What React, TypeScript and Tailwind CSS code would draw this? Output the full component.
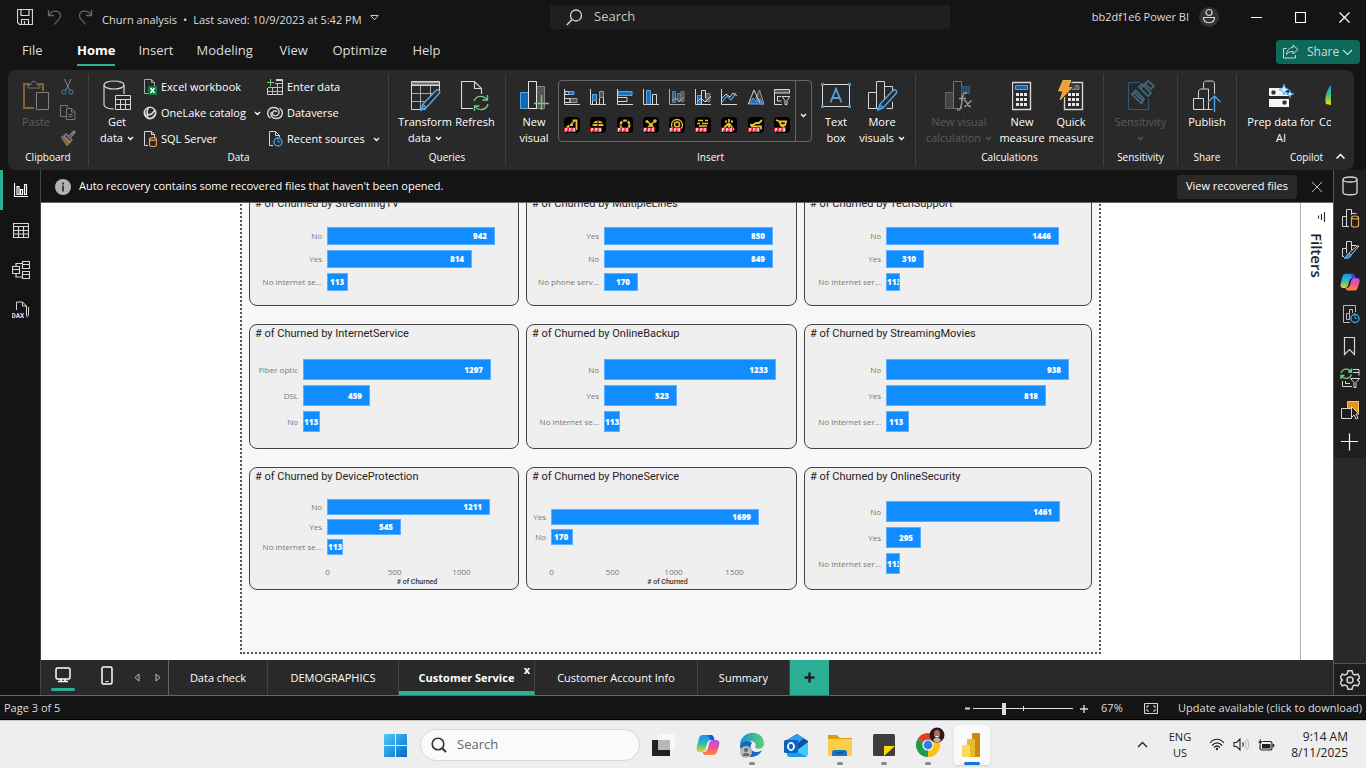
import React from "react";

type P = { children?: React.ReactNode };

/* ---------- shared icon frame ---------- */
function Ic({ w = 16, h, vb, children, className = "" }: P & { w?: number; h?: number; vb?: string; className?: string }) {
  const hh = h ?? w;
  return (
    <svg width={w} height={hh} viewBox={vb ?? `0 0 ${w} ${hh}`} fill="none" stroke="#d6d6d6" strokeWidth="1" className={`shrink-0 ${className}`} aria-hidden="true">
      {children}
    </svg>
  );
}

function Chevron({ className = "" }: { className?: string }) {
  return (
    <svg width="7" height="5" viewBox="0 0 7 5" fill="none" stroke="currentColor" strokeWidth="1.3" className={`inline-block shrink-0 ${className}`} aria-hidden="true">
      <path d="M1 1l2.500 2.500L6 1" />
    </svg>
  );
}

/* ---------- charts ---------- */
type Bar = { label: string; value: number; size: number };
type Chart = {
  field: string;
  offset: number;
  bars: Bar[];
  tight?: boolean;
  axis?: { ticks: number[]; pitch: number; titleShift: string };
};

const rowOne: Chart[] = [
  { field: "StreamingTV", offset: 77, bars: [{ label: "No", value: 942, size: 168 }, { label: "Yes", value: 814, size: 145 }, { label: "No internet se...", value: 113, size: 21 }] },
  { field: "MultipleLines", offset: 77, bars: [{ label: "Yes", value: 850, size: 169 }, { label: "No", value: 849, size: 169 }, { label: "No phone serv...", value: 170, size: 34 }] },
  { field: "TechSupport", offset: 81, bars: [{ label: "No", value: 1446, size: 173 }, { label: "Yes", value: 310, size: 38 }, { label: "No internet ser...", value: 113, size: 14 }] },
];
const rowTwo: Chart[] = [
  { field: "InternetService", offset: 53, bars: [{ label: "Fiber optic", value: 1297, size: 188 }, { label: "DSL", value: 459, size: 67 }, { label: "No", value: 113, size: 17 }] },
  { field: "OnlineBackup", offset: 77, bars: [{ label: "No", value: 1233, size: 172 }, { label: "Yes", value: 523, size: 73 }, { label: "No internet se...", value: 113, size: 16 }] },
  { field: "StreamingMovies", offset: 81, bars: [{ label: "No", value: 938, size: 183 }, { label: "Yes", value: 818, size: 160 }, { label: "No internet ser...", value: 113, size: 23 }] },
];
const rowThree: Chart[] = [
  { field: "DeviceProtection", offset: 77, tight: true, axis: { ticks: [0, 500, 1000], pitch: 67, titleShift: "pl-[66px]" }, bars: [{ label: "No", value: 1211, size: 163 }, { label: "Yes", value: 545, size: 74 }, { label: "No internet se...", value: 113, size: 16 }] },
  { field: "PhoneService", offset: 24, tight: true, axis: { ticks: [0, 500, 1000, 1500], pitch: 61, titleShift: "pl-[12px]" }, bars: [{ label: "Yes", value: 1699, size: 208 }, { label: "No", value: 170, size: 22 }] },
  { field: "OnlineSecurity", offset: 81, bars: [{ label: "No", value: 1461, size: 174 }, { label: "Yes", value: 295, size: 35 }, { label: "No internet ser...", value: 113, size: 14 }] },
];

function ChartCard({ chart, barClass, stackClass, className }: { chart: Chart; barClass: string; stackClass: string; className: string }) {
  return (
    <section className={`flex flex-col rounded-lg border border-[#444] bg-[#efefef] ${className}`}>
      <h2 className="px-[5px] pt-px font-['Roboto',sans-serif] text-[11px] leading-4 text-[#252423]">
        # of Churned by {chart.field}
      </h2>
      <div className={`flex flex-col ${stackClass}`}>
        {chart.bars.map((b) => (
          <div key={b.label} className={`flex items-center ${barClass}`}>
            <span className="flex shrink-0 justify-end whitespace-nowrap pr-[5px] text-[8px] text-[#777]" style={{ width: chart.offset }}>
              {b.label}
            </span>
            <div
              className={`flex h-full items-center overflow-hidden border border-[#5cb0ff] bg-[#118dff] text-[8px] font-extrabold text-white ${b.size < 20 ? "justify-start" : b.size < 30 ? "justify-start pl-[2px]" : "justify-end pr-[7px]"}`}
              style={{ width: b.size }}
            >
              {b.value}
            </div>
          </div>
        ))}
      </div>
      {chart.axis && (
        <div className="mt-auto pb-[2px]">
          <div className="flex" style={{ marginLeft: chart.offset - Math.floor(chart.axis.pitch / 2) }}>
            {chart.axis.ticks.map((t) => (
              <span key={t} className="shrink-0 text-center text-[8px] leading-[10px] text-[#777]" style={{ width: chart.axis!.pitch }}>
                {t}
              </span>
            ))}
          </div>
          <p className={`text-center font-['Roboto',sans-serif] text-[7px] font-medium leading-[10px] text-[#333] ${chart.axis.titleShift}`}># of Churned</p>
        </div>
      )}
    </section>
  );
}

/* ---------- ribbon ---------- */
function Group({ title, width, children }: P & { title: string; width: string }) {
  return (
    <div className={`flex flex-col pt-2 ${width}`}>
      <div className="flex h-[70px] items-start">{children}</div>
      <div className="text-center text-[10px] leading-[18px] text-white">{title}</div>
    </div>
  );
}
function Divider() {
  return <div className="my-1 w-px shrink-0 bg-[#3f3f3f]" />;
}
function Tile({ icon, l1, l2, chevron, width, dim }: { icon: React.ReactNode; l1: string; l2?: string; chevron?: boolean; width: string; dim?: boolean }) {
  return (
    <button type="button" disabled={dim} className={`flex shrink-0 flex-col items-center text-[11px] leading-4 ${dim ? "text-[#5c5c5c]" : "text-white"} ${width}`}>
      <span className="flex h-9 items-center justify-center">{icon}</span>
      <span className="whitespace-nowrap">{l1}</span>
      {(l2 || chevron) && (
        <span className="flex h-4 items-center gap-1 whitespace-nowrap">
          {l2}
          {chevron && <Chevron />}
        </span>
      )}
    </button>
  );
}
function RowButton({ icon, label, chevron }: { icon: React.ReactNode; label: string; chevron?: boolean }) {
  return (
    <button type="button" className="flex h-[26px] items-center gap-1 whitespace-nowrap text-[11px] text-white">
      {icon}
      {label}
      {chevron && <Chevron className="ml-1" />}
    </button>
  );
}

const pasteIcon = (
  <Ic w={28} h={32}>
    <path d="M8 4H2v24h10M16 4h5v7" stroke="#8a6130" strokeWidth="2" />
    <path d="M6 8V5h3c0-5 6-5 6 0h3v3z" stroke="#777" />
    <path d="M14.500 12.500h12v17h-12z" stroke="#808080" />
  </Ic>
);
const getDataIcon = (
  <Ic w={28} h={32}>
    <ellipse cx="11" cy="5" rx="10" ry="4" strokeWidth="1.200" />
    <path d="M1 5v20c0 2 4 4 10 4M21 5v9" strokeWidth="1.200" />
    <path d="M12.500 15.500h15v14h-15zM12.500 19.500h15M12.500 24.500h15M17.500 19v10M22.500 19v10" />
  </Ic>
);
const pageOutline = "M5 14.500H1.500V.5h7l3 3V7M8.500.5v3h3";
const excelIcon = (
  <Ic w={14} h={16}>
    <path d={pageOutline} stroke="#aaa" />
    <path d="M5 7h9v9H5z" fill="#107c41" stroke="none" />
    <path d="M7.500 9l4 5M11.500 9l-4 5" stroke="#fff" strokeWidth="1.300" />
  </Ic>
);
const oneLakeIcon = (
  <Ic w={14}>
    <circle cx="7" cy="7" r="5.800" strokeWidth="1.400" />
    <path d="M5.500 2c-2 3-2 6 0 6.500S10 7 12 4M5 8c-1 2-.500 4 1 4.500 2 0 5-2 6.500-5M2 5.500c-1 3 1 5 3 3" strokeWidth="1.600" />
  </Ic>
);
const sqlIcon = (
  <Ic w={14} h={16}>
    <path d={pageOutline} />
    <path d="M6.500 8v6c0 2 7 2 7 0V8" fill="#292929" stroke="#e8a452" strokeWidth="1.200" />
    <ellipse cx="10" cy="8" rx="3.500" ry="1.400" stroke="#e8a452" fill="#292929" strokeWidth="1.200" />
  </Ic>
);
const enterIcon = (
  <Ic w={16}>
    <path d="M9 .5h6.500v15H.5V9M9 1.500h6" />
    <path d="M8 4.500h7.500M1 8.500h14.500M1 12.500h14.500M5.500 8v7.500M10.500 4v11.500" stroke="#bbb" />
    <path d="M3.500 0v7M0 3.500h7" stroke="#6fd080" />
  </Ic>
);
const dataverseIcon = (
  <Ic w={16}>
    <path d="M3.500 13C-1 10 0 3.500 6 2.500c5-.6 7 3.500 5.500 6.500-1.500 2.500-5.500 2.500-6 0-.4-3 3-4.500 4.500-2" strokeWidth="1.400" />
    <path d="M12.500 3c4.500 3 3.500 9.500-2.500 10.500-5 .6-7-3.500-5.500-6.500" strokeWidth="1.400" />
  </Ic>
);
const recentIcon = (
  <Ic w={16}>
    <path d="M6 14.500H2.500V.5h6l4 4V6M8.500.5v4h4" />
    <circle cx="11" cy="11" r="4" stroke="#4da3e0" strokeWidth="1.300" />
    <path d="M11 8.500V11h2" stroke="#4da3e0" />
  </Ic>
);
const pencil = (
  <>
    <path d="M11 30l2-6L26 10.500c2-2 5 1 3 3L16 28z" fill="#292929" stroke="#5aa7e6" strokeWidth="1.400" />
    <path d="M11 30l2-6 3.500 3.500z" fill="#1c7fd6" stroke="#5aa7e6" />
  </>
);
const transformIcon = (
  <Ic w={31} h={32}>
    <path d="M1.500 2h28v3h-28z" fill="#666" />
    <path d="M1.500 1.500h28v28h-28zM1.500 5.500h28" />
    <path d="M1.500 13.500h28M1.500 21.500h20M10.500 6v23M20.500 6v20" stroke="#aaa" />
    <path d="M14 31h17V12z" fill="#292929" stroke="none" />
    {pencil}
  </Ic>
);
const refreshIcon = (
  <Ic w={28} h={32}>
    <path d="M12 28.500H.5v-27h13l7 7V14M13.500 1.500v7h7" strokeWidth="1.200" />
    <path d="M13 21c2-6 10-6 13-1M27 24c-2 7-10 7-13 2M26.500 15v5h-5M13.500 31v-5h5" stroke="#6fd080" strokeWidth="1.300" />
  </Ic>
);
const newVisualIcon = (
  <Ic w={29} h={32}>
    <path d="M16.500 6.500h8v22h-8z" fill="#555" stroke="#888" />
    <path d="M.5 12.500h8v16h-8z" fill="#1168b8" stroke="#5aa7e6" />
    <path d="M8.500 1.500h8v27h-8z" fill="#292929" stroke="#e6e6e6" />
    <path d="M21.500 15v15M14 23.500h15" stroke="#6fd080" strokeWidth="1.300" />
  </Ic>
);
const textBoxIcon = (
  <Ic w={32} h={28}>
    <path d="M2.500 2.500h27v22h-27z" />
    <path d="M1 1h3v3H1zM28 1h3v3h-3zM1 23h3v3H1zM28 23h3v3h-3z" fill="#3a96dd" stroke="none" />
    <path d="M10.500 20.500L16 7l5.500 13.500M12.500 16h7" stroke="#4da3e0" strokeWidth="1.800" />
  </Ic>
);
const moreVisualsIcon = (
  <Ic w={31} h={32}>
    <path d="M1.500 12.500h8v16h-8zM9.500 1.500h8v27h-8zM17.500 6.500h8v22h-8z" />
    <path d="M10 30l17-19v9l-8 9z" fill="#292929" stroke="none" />
    {pencil}
  </Ic>
);
const visualCalcIcon = (
  <Ic w={30} h={32}>
    <path d="M1.500 12.500h8v16h-8z" fill="#444" stroke="#666" />
    <path d="M9.500 1.500h8v27h-8z" stroke="#777" />
    <path d="M17.500 6.500h8v7h-8z" fill="#224e70" stroke="#2d5c80" />
    <path d="M13 30c4 1 4-3 5-9s1-9 5-8M15 18.500h7M20 20.500c4-1 2 7 7 6M27.500 20.500l-7 6.500" stroke="#999" strokeWidth="1.400" />
  </Ic>
);
const calcBody = (x: number) => (
  <>
    <path d={`M${x + 0.5} 2.500h18v27h-18z`} strokeWidth="1.400" />
    {[13, 18, 23].map((y) => [4, 8, 12].map((dx) => <path key={`${y}-${dx}`} d={`M${x + dx} ${y}h3v3h-3z`} fill="#e6e6e6" stroke="none" />))}
  </>
);
const measureIcon = (
  <Ic w={20} h={32}>
    {calcBody(0)}
    <path d="M3.500 5.500h12v4h-12z" fill="#1168b8" stroke="#5aa7e6" />
  </Ic>
);
const quickIcon = (
  <Ic w={26} h={32}>
    {calcBody(6)}
    <path d="M11 5.500h10v4H11z" fill="#666" stroke="#888" />
    <path d="M4 0h9l-3 7h4L1 21l4-10H0z" fill="#292929" stroke="#292929" strokeWidth="3" />
    <path d="M5 .5h8l-3 7h4L2 20l3-9H.5z" fill="#f0a030" stroke="#f6c667" strokeWidth=".8" />
  </Ic>
);
const sensitivityIcon = (
  <Ic w={28} h={32}>
    <path d="M13 2.500H1.500v27h20V19" stroke="#345a73" />
    <path d="M5 14.500l3.500-4L17 19l-2.500 4.500zM7 12.500l9 8.500" stroke="#426e8c" strokeWidth="1.600" />
    <path d="M12 7l3-3 9 9-3 3zM18 4l3-3 6 5-3 3zM13 9l5-4" stroke="#426e8c" strokeWidth="1.600" />
  </Ic>
);
const publishIcon = (
  <Ic w={28} h={32}>
    <path d="M.5 18.500h10v11H.5z" />
    <path d="M5.500 18v-6c0-2 1-3 3-3h7v20.500h-5M10.500 9V4c0-2 1-3 3-3h5c2 0 3 1 3 3v10M15.500 29.500h4" />
    <path d="M21.500 32V16M15 22l6.500-6 6 6" stroke="#4da3e0" strokeWidth="1.400" />
  </Ic>
);
const prepIcon = (
  <Ic w={26} h={24}>
    <path d="M1 4h13l3 4 4 1v3H1zM1 15h20v8H1z" fill="#f5f5f5" stroke="none" />
    <path d="M4 7h3v3H4zM15 17h3v3h-3z" fill="#333" stroke="#333" />
    <path d="M16 0l1.500 4L21 5.500 17.500 7 16 11l-1.500-4L11 5.500 14.500 4zM22 6l1 3 3 1-3 1-1 3-1-3-3-1 3-1z" fill="#d8efff" stroke="#2f95e8" strokeWidth=".8" />
  </Ic>
);

const galleryTop: React.ReactNode[] = [
  <><path d="M1 2.500h4v3H1z" /><path d="M5 2.500h5v3H5z" fill="#1c6fc0" stroke="#5aa7e6" /><path d="M6 9.500h7v4H6z" fill="#555" stroke="#999" /><path d="M.5 0v15.500H16M1 9.500h5v4H1" /></>,
  <><path d="M2.500 5.500h4v6h-4z" fill="#1c6fc0" stroke="#5aa7e6" /><path d="M9.500 2.500h4v6h-4z" fill="#555" stroke="#999" /><path d="M.5 0v15.500H16M2.500 12v3.500M6.500 12v3.500M9.500 9v6.500M13.500 9v6.500" /></>,
  <><path d="M1 2.500h14v4H1z" fill="#1c6fc0" stroke="#5aa7e6" /><path d="M.5 0v15.500H16M1 8.500h9v4H1" /></>,
  <><path d="M3.500 1.500h4v14h-4z" fill="#1c6fc0" stroke="#5aa7e6" /><path d="M.5 0v15.500H16M9.500 15V5.500h4V15" /></>,
  <><path d="M3.500 2.500h3v11h-3z" fill="#1c6fc0" stroke="#777" /><path d="M8.500 4.500h3v7h-3zM12 2.500h3v10h-3z" fill="#555" stroke="#777" /><path d="M.5 0v15.500H16M3 12l4-3 3 4 5-5" stroke="#aaa" /></>,
  <><path d="M2.500 6.500h4v9h-4z" fill="#1c6fc0" stroke="#5aa7e6" /><path d="M11 4.500h4v8h-4z" fill="#555" stroke="#888" /><path d="M.5 0v15.500H16M6.500 15V1.500h4V9M2 13l4-4 4 4 6-6" /></>,
  <><path d="M1 13l5-6 4 4 5-7" stroke="#3f93dc" strokeWidth="1.300" /><path d="M.5 0v15.500H16M1 9l4-4 4 3 3-4 4 3" /></>,
  <><path d="M8 9l3.500-8L16 15h-5z" fill="#444" stroke="#999" /><path d="M1 15l4-6 4 4 3-3 3 5z" fill="#1c6fc0" stroke="#5aa7e6" /><path d="M0 15.500L6 1l6 13" /></>,
  <><path d="M1 1h14v3H1z" fill="#555" stroke="none" /><path d="M.5.500h15v3.500H.5zM.5 4v11.500H8M3 7.500h4M3.500 8v4h4M8 7.500h8l-3 4v4h-2v-4z" /></>,
];
const galleryPro: React.ReactNode[] = [
  <path d="M2.500 10h2V8M6 8h2V5.500M9.500 5.500V3.500h3V13" />,
  <><path d="M2.500 9a5.500 5.500 0 0111 0z" fill="#e9bd32" stroke="none" /><path d="M8 3v7M3 6.500h10" stroke="#111" strokeWidth="1" /></>,
  <circle cx="8" cy="8" r="4.500" strokeDasharray="3.700 1" strokeWidth="2.200" />,
  <><path d="M4 4l8 8M12 4L5 10" strokeWidth="1.500" /><circle cx="12" cy="4" r="1.800" fill="#e9bd32" stroke="none" /><circle cx="4" cy="4.500" r="1.500" fill="#e9bd32" stroke="none" /><circle cx="8" cy="8" r="2" fill="#e9bd32" stroke="none" /></>,
  <><circle cx="8" cy="8" r="5.500" strokeWidth="1.300" /><circle cx="8" cy="7.500" r="2.500" strokeWidth="1.600" /></>,
  <path d="M3 3.500h5M10 3.500h3M2 6.500h3M7 6.500h6M4 9h8" strokeWidth="1.600" />,
  <path d="M8 2v3M4 4.500h2M10 4.500h2M8 6l-5 5M8 6l5 7M8 6v5" />,
  <path d="M2 8h3l3-2h3l3-3M3 9.500h10v3" />,
  <path d="M2 3l4 1.500h7M5 4l2 4h4l1.500-4M6 8l5 3" />,
];

function Gallery() {
  return (
    <div className="flex h-[62px] w-[254px] shrink-0 rounded border border-[#666]">
      <div className="grid flex-1 grid-cols-9 items-center">
        {galleryTop.map((g, i) => (
          <button type="button" key={`t${i}`} aria-label={`Visual ${i + 1}`} className="flex justify-center"><Ic>{g}</Ic></button>
        ))}
        {galleryPro.map((g, i) => (
          <button type="button" key={`p${i}`} aria-label={`Pro visual ${i + 1}`} className="-mt-[3px] flex justify-center">
            <Ic>
              <rect width="16" height="16" rx="4" fill="#000" stroke="none" />
              <g stroke="#e9bd32" strokeWidth="1.800">{g}</g>
              <path d="M0 10.500h12V15H0z" fill="#e81123" stroke="none" />
              <path d="M1.500 14.500v-3H3V13H2M5.500 14.500v-3H7V13H6M9 11.500h1.500v2.500H9z" stroke="#fff" strokeWidth=".8" />
            </Ic>
          </button>
        ))}
      </div>
      <button type="button" aria-label="More visual types" className="flex w-[16px] items-center justify-center border-l border-[#666] pt-2 text-white"><Chevron /></button>
    </div>
  );
}

function Ribbon() {
  return (
    <div className="mx-2 mr-3 flex h-[100px] shrink-0 overflow-hidden rounded-lg bg-[#292929]">
      <Group title="Clipboard" width="w-[80px] shrink-0">
        <div className="flex pl-2">
          <Tile width="w-[40px]" icon={pasteIcon} l1="Paste" dim />
          <div className="flex flex-col gap-[9px] pl-1">
            <button type="button" aria-label="Cut"><Ic w={16} h={17}><path d="M4.500 1l5 11M11 1L6 12" stroke="#888" /><circle cx="4" cy="14" r="2" stroke="#35688c" strokeWidth="1.300" /><circle cx="11" cy="14" r="2" stroke="#35688c" strokeWidth="1.300" /></Ic></button>
            <button type="button" aria-label="Copy"><Ic w={16} h={17}><path d="M6 12.500H.5v-11h7v2M6.500 4.500h5l3.500 3v8H6.500zM11.500 4.500v3.500H15M8.500 10.500h4M8.500 12.500h4" stroke="#777" /></Ic></button>
            <button type="button" aria-label="Format painter"><Ic w={16} h={17}><path d="M1 7l3-1 7 6-4 4z" fill="#8a6b3c" stroke="#8a6b3c" /><path d="M4 6l2-2 6 6-2 2zM9 6l5-5 1 1-4 5" stroke="#888" strokeWidth="1.300" /></Ic></button>
          </div>
        </div>
      </Group>
      <Divider />
      <Group title="Data" width="w-[299px] shrink-0">
        <Tile width="w-[54px] pl-[2px]" icon={getDataIcon} l1="Get" l2="data" chevron />
        <div className="-mt-1 flex w-[124px] shrink-0 flex-col items-start">
          <RowButton icon={excelIcon} label="Excel workbook" />
          <RowButton icon={oneLakeIcon} label="OneLake catalog" chevron />
          <RowButton icon={sqlIcon} label="SQL Server" />
        </div>
        <div className="-mt-1 flex flex-col items-start">
          <RowButton icon={enterIcon} label="Enter data" />
          <RowButton icon={dataverseIcon} label="Dataverse" />
          <RowButton icon={recentIcon} label="Recent sources" chevron />
        </div>
      </Group>
      <Divider />
      <Group title="Queries" width="w-[116px] shrink-0">
        <div className="flex pl-[9px]">
          <Tile width="w-[54px]" icon={transformIcon} l1="Transform" l2="data" chevron />
          <Tile width="w-[46px]" icon={refreshIcon} l1="Refresh" />
        </div>
      </Group>
      <Divider />
      <Group title="Insert" width="w-[409px] shrink-0">
        <Tile width="w-[52px] pl-1" icon={newVisualIcon} l1="New" l2="visual" />
        <div className="pt-[2px]"><Gallery /></div>
        <Tile width="w-[48px]" icon={textBoxIcon} l1="Text" l2="box" />
        <Tile width="w-[44px]" icon={moreVisualsIcon} l1="More" l2="visuals" chevron />
      </Group>
      <Divider />
      <Group title="Calculations" width="w-[187px] shrink-0">
        <Tile width="w-[82px] pl-1" icon={visualCalcIcon} l1="New visual" l2="calculation" chevron dim />
        <Tile width="w-[48px]" icon={measureIcon} l1="New" l2="measure" />
        <Tile width="w-[50px]" icon={quickIcon} l1="Quick" l2="measure" />
      </Group>
      <Divider />
      <Group title="Sensitivity" width="w-[73px] shrink-0">
        <Tile width="w-full" icon={sensitivityIcon} l1="Sensitivity" chevron dim />
      </Group>
      <Divider />
      <Group title="Share" width="w-[58px] shrink-0">
        <Tile width="w-full" icon={publishIcon} l1="Publish" />
      </Group>
      <Divider />
      <div className="flex min-w-0 flex-1 items-end">
        <div className="flex min-w-0 flex-1 flex-col self-stretch pt-2">
          <div className="flex h-[70px]">
            <Tile width="w-[82px] pl-[6px]" icon={prepIcon} l1="Prep data for" l2="AI" />
            <button type="button" className="flex w-3 shrink-0 flex-col items-start overflow-hidden whitespace-nowrap text-[11px] leading-4 text-white" aria-label="Copilot">
              <span className="flex h-9 items-center pl-1"><Ic w={20} h={22}><defs><linearGradient id="cpl" x2="0" y2="1"><stop stopColor="#1a9be8" /><stop offset=".5" stopColor="#3fc47a" /><stop offset="1" stopColor="#ffd800" /></linearGradient></defs><path d="M8 0C4 4 1 14 3 19l5 1z" fill="url(#cpl)" stroke="none" /></Ic></span>
              Co
            </button>
          </div>
          <div className="pl-10 text-center text-[10px] leading-[18px] text-white">Copilot</div>
        </div>
        <button type="button" aria-label="Collapse ribbon" className="mb-[11px] flex w-[18px] shrink-0 text-white">
          <svg width="9" height="6" viewBox="0 0 9 6" fill="none" stroke="currentColor" strokeWidth="1.500" aria-hidden="true"><path d="M.5 5.500l4-4 4 4" /></svg>
        </button>
      </div>
    </div>
  );
}

/* ---------- window chrome ---------- */
function TitleBar() {
  return (
    <header className="flex h-[34px] shrink-0 items-center text-[#dedede]">
      <div className="flex w-[550px] shrink-0 items-center pl-[17px]">
        <button type="button" aria-label="Save"><Ic><path d="M.5.500h15v15h-13l-2-2zM4 .5v6h8v-6M4.500 15.500v-5h7v5M7.500 12v3.500" strokeWidth="1.200" /></Ic></button>
        <button type="button" aria-label="Undo" className="ml-[14px]"><Ic><path d="M1.500 1v5.500H7M1.500 6.500C5 0 14 1 13.500 7c0 3-3 4-6 8.500" stroke="#666" strokeWidth="1.300" /></Ic></button>
        <button type="button" aria-label="Redo" className="ml-[14px]"><Ic><path d="M14.500 1v5.500H9M14.500 6.500C11 0 2 1 2.500 7c0 3 3 4 6 8.500" stroke="#666" strokeWidth="1.300" /></Ic></button>
        <span className="ml-[9px] mt-[6px] flex items-center gap-2 whitespace-nowrap text-[11px] leading-5">
          <span className="flex gap-[6px]"><span>Churn analysis</span><span>•</span><span>Last saved: 10/9/2023 at 5:42 PM</span></span>
          <svg width="9" height="6" viewBox="0 0 9 6" fill="none" stroke="#ccc" className="-mt-1" aria-hidden="true"><path d="M.8.500h7.400L4.500 4.800z" /></svg>
        </span>
      </div>
      <label className="flex h-6 w-[400px] shrink items-center gap-[11px] rounded-[2px] bg-[#1f1f1f] pl-4">
        <Ic w={17}><circle cx="10" cy="6.500" r="5.500" strokeWidth="1.300" /><path d="M6 10.500L.8 16" strokeWidth="1.300" /></Ic>
        <input type="text" aria-label="Search" placeholder="Search" className="w-full bg-transparent text-[13px] outline-none placeholder:text-[#c8c8c8]" />
      </label>
      <div className="ml-auto flex items-center">
        <span className="whitespace-nowrap text-[11px]">bb2df1e6 Power BI</span>
        <button type="button" aria-label="Account" className="ml-[10px]"><Ic w={20}><circle cx="10" cy="10" r="10" fill="#333" stroke="none" /><circle cx="10" cy="5.500" r="3" strokeWidth="1.200" /><path d="M4.500 10.500h11c.5 7-11.500 7-11 0z" strokeWidth="1.200" /></Ic></button>
        <button type="button" aria-label="Minimize" className="ml-[15px] flex w-11 justify-center"><Ic w={11}><path d="M0 5.500h11" stroke="#fff" /></Ic></button>
        <button type="button" aria-label="Maximize" className="flex w-11 justify-center"><Ic w={11}><path d="M.5.500h10v10H.5z" stroke="#fff" strokeWidth="1.200" /></Ic></button>
        <button type="button" aria-label="Close" className="flex w-11 justify-center"><Ic w={11}><path d="M.5.500l10 10M10.500.500l-10 10" stroke="#fff" strokeWidth="1.200" /></Ic></button>
      </div>
    </header>
  );
}

function MenuBar() {
  const item = "border-b-2 border-transparent pb-[2px]";
  return (
    <nav className="flex h-9 shrink-0 items-center whitespace-nowrap pl-[22px] text-[13px] leading-6 text-[#dedede]">
      <button type="button" className={`w-[55px] text-left ${item}`}>File</button>
      <button type="button" className="mr-[23px] border-b-2 border-[#2bb095] pb-[2px] font-bold text-white">Home</button>
      <button type="button" className={`w-[58px] text-left ${item}`}>Insert</button>
      <button type="button" className={`w-[83px] text-left ${item}`}>Modeling</button>
      <button type="button" className={`w-[53px] text-left ${item}`}>View</button>
      <button type="button" className={`w-[80px] text-left ${item}`}>Optimize</button>
      <button type="button" className={item}>Help</button>
      <button type="button" className="ml-auto mr-[6px] flex h-6 w-[84px] items-center rounded bg-[#0c695a] pl-[7px] text-[12px] text-[#c9dcd8]">
        <Ic><path d="M3.500 4.500h-3v9.500h12v-3M10 1l5 4.500-5 4.500V7.500C7 7.500 5 8 3.500 10.500 4 6 6.500 3.500 10 3.500z" stroke="#c9dcd8" /></Ic>
        <span className="ml-2">Share</span>
        <svg width="11" height="7" viewBox="0 0 11 7" fill="none" stroke="#c9dcd8" strokeWidth="1.200" className="ml-[3px]" aria-hidden="true"><path d="M1 1l4.500 4.500L10 1" /></svg>
      </button>
    </nav>
  );
}

function LeftRail() {
  const b = "flex h-10 w-full items-center justify-center border-l-[3px] pr-[2px]";
  return (
    <nav className="flex w-10 shrink-0 flex-col bg-[#141414]">
      <button type="button" aria-label="Report view" className={`${b} border-[#2bb095]`}><Ic w={14} h={14}><path d="M.5 0v13.500H14M3 11.500v-8h2v8zM6.500 11.500v-5h2v5zM10.500 11.500v-10h2v10z" stroke="#fff" strokeWidth="1.200" /></Ic></button>
      <button type="button" aria-label="Table view" className={`${b} border-transparent`}><Ic w={16} h={15}><path d="M.5.500h15v14H.5zM.5 3.500h15M.5 7.500h15M.5 11h15M5.500 3v11.500M10.500 3v11.500" strokeWidth="1.200" /></Ic></button>
      <button type="button" aria-label="Model view" className={`${b} border-transparent`}><Ic w={18}><path d="M.5 5.500h7v7h-7zM.5 8.500h7M10.500.500h7v7h-7zM10.500 3.500h7M10.500 10.500h7v7h-7zM10.500 13.500h7M4 5.500v-3h6.500M4 12.500V16h6.500" strokeWidth="1.200" /></Ic></button>
      <button type="button" aria-label="DAX query view" className={`${b} border-transparent`}>
        <Ic w={18} h={18}><path d="M4.500 9V1h6l4 4v10M10.500 1v4h4M16.500 6v7c0 2-1 3-2 3.500" /><text x="-.5" y="16.500" fontSize="6.500" fontWeight="700" fill="#e0e0e0" stroke="none" fontFamily="Roboto, sans-serif">DAX</text></Ic>
      </button>
    </nav>
  );
}

const copilotShape = (id: string) => (
  <>
    <defs>
      <linearGradient id={`${id}a`} x2="0" y2="1"><stop stopColor="#1d8df0" /><stop offset=".55" stopColor="#33c0b0" /><stop offset="1" stopColor="#f6d21c" /></linearGradient>
      <linearGradient id={`${id}b`} x2="0" y2="1"><stop stopColor="#a855f0" /><stop offset=".5" stopColor="#f0508c" /><stop offset="1" stopColor="#ff8a3c" /></linearGradient>
    </defs>
    <path d="M7 2h7c2 0 3 1 3.500 3l.5 2h-3c-2 0-3 1-4 4l-1 4c-1 3-2 4-4 4H4c-3 0-4-2-3-6l2-8c.6-2 2-3 4-3z" fill={`url(#${id}a)`} stroke="none" />
    <path d="M12 2h3c2 0 3 2 3.500 5H15l-2-3z" fill="#1b52d8" stroke="none" />
    <path d="M17 22h-7c-2 0-3-1-3.500-3H8c2 0 3-1 4-4l1-4c1-3 2-4 4-4h3c3 0 4 2 3 6l-2 6c-.6 2-2 3-4 3z" fill={`url(#${id}b)`} stroke="none" />
  </>
);

function RightRail() {
  const icons: [string, React.ReactNode][] = [
    ["Data", <><ellipse cx="10" cy="3.500" rx="7" ry="2.500" strokeWidth="1.300" /><path d="M3 3.500v13c0 3 14 3 14 0v-13" strokeWidth="1.300" /></>],
    ["Build", <><path d="M9 18.500H2.500v-10h4M6.500 18V1.500h5V7M11.500 5.500h5" /><path d="M11.500 9.500v8c0 2 7 2 7 0v-8" fill="#1f1f1f" stroke="#e8a95c" strokeWidth="1.200" /><ellipse cx="15" cy="9.500" rx="3.500" ry="1.500" stroke="#e8a95c" strokeWidth="1.200" /></>],
    ["Format", <><path d="M4 16.500H2.500v-8h4M6.500 13V1.500h5V10M11.500 5.500h5" /><path d="M19 6l-8 9-2-2 8-7z" fill="#1f1f1f" /><path d="M4 18c3 0 2-4 5-5l2 2c0 3-4 4-7 3z" fill="#2f8de0" stroke="#6bb5f0" /></>],
    ["Copilot", <g transform="scale(.84)">{copilotShape("rr")}</g>],
    ["Performance", <><path d="M10 18.500H3.500v-17h12V8M6.500 15.500v-6h3v6zM9.500 13V5.500h3V9" stroke="#bbb" /><circle cx="15" cy="14.500" r="4" stroke="#4da3e0" strokeWidth="1.300" fill="#1f1f1f" /><path d="M15 12v2.500h2M15 9v1.500" stroke="#4da3e0" /></>],
    ["Bookmarks", <path d="M4.500 1.500h10v17L9.500 13.500 4.500 18.500z" strokeWidth="1.200" />],
    ["Sync slicers", <><path d="M13 1.500h6v6M13 4.500h6M2.500 13v5.500H12M5.500 13v2.500H10M10.500 10.500h9l-3.500 4v5h-2v-5z" /><path d="M1 5c2-5 8-5 10-1M11.500 6.500c-2 5-8 5-10 1M11.500.500V4H8M1 11V7.500h3.500" stroke="#6fd080" strokeWidth="1.400" /></>],
    ["Selection", <><path d="M7.500 1.500h11v11h-11z" fill="#e8921e" stroke="#f6c667" /><path d="M1.500 8.500h10v10h-10z" fill="#1f1f1f" /><path d="M11.500 6.500v11l2.500-2.500 2 4 2-1-2-4h3z" fill="#1f1f1f" /></>],
    ["Add", <path d="M9.500 1.500v17M1 9.500h17" stroke="#fff" strokeWidth="1.200" />],
  ];
  return (
    <aside className="flex w-[33px] shrink-0 flex-col border-l border-[#555] bg-[#292929]">
      <div className="flex flex-col bg-[#1f1f1f]">
        {icons.map(([name, g]) => (
          <button type="button" key={name} aria-label={name} className="flex h-8 items-center justify-center"><Ic w={20}>{g}</Ic></button>
        ))}
      </div>
      <button type="button" aria-label="Settings" className="mt-auto flex h-8 items-center justify-center border-t border-[#555] bg-[#1f1f1f]">
        <Ic w={20}><path d="M8 .8h4l.8 3 2 1.200 3-.8 2 3.400-2.200 2.400 2.200 2.400-2 3.400-3-.8-2 1.200-.8 3H8l-.8-3-2-1.200-3 .8-2-3.400L2.400 10 .2 7.600l2-3.400 3 .8 2-1.200z" strokeWidth="1.500" /><circle cx="10" cy="10" r="3" strokeWidth="1.500" /></Ic>
      </button>
    </aside>
  );
}

function PageTabs() {
  const t = "h-full shrink-0 border-r border-[#444] pt-[2px] text-[11px] text-white";
  return (
    <div className="flex h-[35px] shrink-0 items-stretch whitespace-nowrap bg-[#292929]">
      <div className="flex w-[128px] shrink-0 border-r border-[#666]">
        <button type="button" aria-label="Desktop layout" className="ml-[10px] flex w-6 flex-col items-center justify-between pb-1 pt-[7px]">
          <Ic w={16} h={16}><rect x="1" y="1" width="14" height="11" rx="1.500" stroke="#fff" strokeWidth="1.500" /><path d="M3 14.500h10M6 12v2M10 12v2" stroke="#fff" strokeWidth="1.500" /></Ic>
          <span className="h-[3px] w-6 rounded bg-[#2bb095]" />
        </button>
        <button type="button" aria-label="Mobile layout" className="ml-[26px] flex pt-[6px]"><Ic w={12} h={19}><rect x="1" y="1" width="10" height="17" rx="1.500" stroke="#fff" strokeWidth="1.500" /><path d="M4.500 15.500h3" stroke="#fff" /></Ic></button>
        <button type="button" aria-label="Previous page" className="ml-[21px] flex items-center"><Ic w={6} h={9}><path d="M5 1v7L1 4.500z" stroke="#bbb" /></Ic></button>
        <button type="button" aria-label="Next page" className="ml-[15px] flex items-center"><Ic w={6} h={9}><path d="M1 1v7l4-3.500z" stroke="#bbb" /></Ic></button>
      </div>
      <button type="button" className={`w-[99px] ${t}`}>Data check</button>
      <button type="button" className={`w-[131px] ${t}`}>DEMOGRAPHICS</button>
      <button type="button" className="relative h-full w-[136px] shrink-0 border-b-4 border-r border-b-[#2bb095] border-r-[#444] pt-[6px] text-[11px] font-bold text-white">
        Customer Service
        <span className="absolute right-1 top-0 text-[11px] leading-5">x</span>
      </button>
      <button type="button" className={`w-[163px] ${t}`}>Customer Account Info</button>
      <button type="button" className={`w-[92px] ${t}`}>Summary</button>
      <button type="button" aria-label="New page" className="flex w-[39px] items-center justify-center bg-[#2bb095]"><Ic w={11}><path d="M5.500.500v10M.5 5.500h10" stroke="#1f1f1f" strokeWidth="2.500" /></Ic></button>
    </div>
  );
}

function Canvas() {
  return (
    <div className="flex min-h-0 flex-1 flex-col items-center justify-end overflow-hidden bg-white pb-[6px]">
      <div className="flex w-[861px] shrink-0 flex-col gap-[18px] border-2 border-dotted border-[#555] bg-[#f7f7f7] pb-[62px] pl-[7px] pt-2">
        <div className="grid grid-cols-[277px_278px_288px]">
          {rowOne.map((c) => <ChartCard key={c.field} chart={c} className={`h-[112px] ${c.offset === 81 ? "" : "mr-[7px]"}`} barClass="h-[18px]" stackClass="mt-[15px] gap-[5px]" />)}
        </div>
        <div className="grid grid-cols-[277px_278px_288px]">
          {rowTwo.map((c) => <ChartCard key={c.field} chart={c} className={`h-[125px] ${c.offset === 81 ? "" : "mr-[7px]"}`} barClass="h-[21px]" stackClass="mt-[17px] gap-[5px]" />)}
        </div>
        <div className="grid grid-cols-[277px_278px_288px]">
          {rowThree.map((c) => (
            <ChartCard
              key={c.field}
              chart={c}
              className={`h-[123px] ${c.offset === 81 ? "" : "mr-[7px]"}`}
              barClass={c.tight ? "h-4" : "h-[21px]"}
              stackClass={c.bars.length === 2 ? "mt-[24px] gap-1" : c.tight ? "mt-[14px] gap-1" : "mt-4 gap-[5px]"}
            />
          ))}
        </div>
      </div>
    </div>
  );
}

function StatusBar() {
  return (
    <footer className="flex h-[25px] shrink-0 items-center whitespace-nowrap border-b border-t border-b-black border-t-[#666] bg-[#141414] pt-[2px] text-[11px] text-[#dedede]">
      <span className="pl-1">Page 3 of 5</span>
      <div className="ml-auto flex items-center pr-1">
        <button type="button" aria-label="Zoom out" className="flex"><Ic w={5} h={11}><path d="M0 5.500h5" strokeWidth="2" /></Ic></button>
        <input
          type="range"
          aria-label="Zoom"
          min={0}
          max={100}
          defaultValue={30}
          className="mx-[3px] h-3 w-[100px] appearance-none bg-[linear-gradient(#dedede,#dedede),linear-gradient(#dedede,#dedede)] bg-[length:100%_1px,1px_5px] bg-center bg-no-repeat [&::-webkit-slider-thumb]:h-3 [&::-webkit-slider-thumb]:w-1 [&::-webkit-slider-thumb]:appearance-none [&::-webkit-slider-thumb]:bg-[#dedede]"
        />
        <button type="button" aria-label="Zoom in" className="ml-1 flex"><Ic w={8} h={8}><path d="M4 0v8M0 4h8" strokeWidth="1.400" /></Ic></button>
        <span className="ml-[13px] w-[43px]">67%</span>
        <button type="button" aria-label="Fit to page" className="mr-5 flex"><Ic w={14} h={11}><rect x=".5" y=".5" width="13" height="10" rx="1" strokeWidth="1.200" /><path d="M5 3H3v2M9 3h2v2M3 6v2h2M11 6v2H9" /></Ic></button>
        <a href="#update">Update available (click to download)</a>
      </div>
    </footer>
  );
}

function TaskIcon({ name, running, active, children }: P & { name: string; running?: boolean; active?: boolean }) {
  return (
    <button type="button" aria-label={name} className="flex w-11 shrink-0 justify-center">
      <span className={`flex h-10 w-9 flex-col items-center justify-between rounded pt-2 ${active ? "bg-[#fafafa] shadow-sm" : ""}`}>
        <svg width="24" height="24" viewBox="0 0 24 24" fill="none" className="shrink-0 overflow-visible" aria-hidden="true">{children}</svg>
        <span className={`rounded-full ${active ? "h-[3px] w-4 bg-[#0a78d4]" : running ? "h-[3px] w-[6px] bg-[#8a8a8a]" : "h-[3px] w-[6px]"}`} />
      </span>
    </button>
  );
}

function Taskbar() {
  return (
    <div className="grid h-12 shrink-0 grid-cols-[1fr_auto_1fr] items-center border-t border-[#c8c8c8] bg-[#eee] text-[11px] text-[#222]">
      <span />
      <div className="flex items-center gap-0 pl-[2px]">
        <TaskIcon name="Start">
          <defs><linearGradient id="win" x2="1" y2="1"><stop stopColor="#4fcdfa" /><stop offset="1" stopColor="#0568c8" /></linearGradient></defs>
          <path d="M0 1h11v11H0zM12 1h11v11H12zM0 13h11v11H0zM12 13h11v11H12z" fill="url(#win)" />
        </TaskIcon>
        <label className="mx-[2px] flex h-8 w-[220px] items-center gap-[10px] rounded-full border border-[#d8d8d8] bg-[#fafafa] pl-[10px]">
          <svg width="16" height="16" viewBox="0 0 16 16" fill="none" stroke="#333" strokeWidth="1.600" className="shrink-0" aria-hidden="true"><circle cx="7" cy="7" r="5.800" /><path d="M11 11l4 4" strokeWidth="2" /></svg>
          <input type="text" aria-label="Taskbar search" placeholder="Search" className="w-full bg-transparent text-[13px] outline-none placeholder:text-[#666]" />
        </label>
        <TaskIcon name="Task view"><path d="M0 7h18v16H0z" fill="#222" /><path d="M6 1h17v16H6z" fill="#f8f8f8" /><path d="M6 7h12v10H6z" fill="#b8b8b8" /></TaskIcon>
        <TaskIcon name="Copilot">{copilotShape("tb")}</TaskIcon>
        <TaskIcon name="Edge" running>
          <defs><linearGradient id="edge" x2="1"><stop stopColor="#1b8fe0" /><stop offset="1" stopColor="#56d66c" /></linearGradient></defs>
          <path d="M0 12C1-4 24-4 24 11c0 5-7 6-9 3 2-2 0-6-4-6-4-.5-9 1-11 4z" fill="url(#edge)" />
          <path d="M0 12C2 7 11 7 12 10c-3 3-1 9 4 9 3 0 5-1 6-2-2 5-7 7-11 7C4 24 0 18 0 12z" fill="#1368c4" />
          <circle cx="6" cy="19" r="6" fill="#b9b9b9" /><circle cx="6" cy="17" r="2" fill="#666" /><path d="M2.500 23c0-4 7-4 7 0z" fill="#666" />
        </TaskIcon>
        <TaskIcon name="Outlook">
          <path d="M13 1l11 7v3L13 18 3 11V7z" fill="#0f4fa8" /><path d="M13 1l7 4.500-11 8L3 10V7z" fill="#2a9df0" /><path d="M24 9v12c0 1.500-1 3-3 3H6c-1.500 0-3-1-3-3v-6l9 3z" fill="#3ccbfa" /><path d="M3 15l19 8c-.5.600-1 1-2 1H6c-1.500 0-3-1-3-3z" fill="#1a9df0" />
          <rect y="7" width="14" height="13" rx="1.500" fill="#0a65c0" /><ellipse cx="7" cy="13.500" rx="3" ry="3.600" stroke="#fff" strokeWidth="1.800" />
        </TaskIcon>
        <TaskIcon name="File Explorer" running><path d="M0 2h9l3 3h12v5H0z" fill="#d99d10" /><path d="M0 6h24v17H0z" fill="#fbcf4b" /><path d="M4 23v-4c0-1 1-2 2-2h11c1 0 2 1 2 2v4z" fill="#1875c4" /><path d="M8 19h7v1.500H8z" fill="#0c4d8a" /></TaskIcon>
        <TaskIcon name="Sticky Notes" running><rect x="1" y="1" width="22" height="22" rx="1.500" fill="#3d3d3d" /><path d="M12 13h11l-11 10z" fill="#ffd800" /></TaskIcon>
        <TaskIcon name="Chrome" running>
          <path d="M12 12L1.600 6A12 12 0 0122.400 6z" fill="#e33b2e" /><path d="M12 12l10.400-6A12 12 0 0112 24z" fill="#fbc116" /><path d="M12 12v12A12 12 0 011.600 6z" fill="#229a4b" />
          <circle cx="12" cy="12" r="5.600" fill="#fff" /><circle cx="12" cy="12" r="4.400" fill="#2b7de9" />
          <circle cx="21" cy="2" r="7.500" fill="#2b1a19" /><ellipse cx="21" cy="1" rx="3" ry="4" fill="#b0705a" /><path d="M17 7c2-3 6-3 8 0-2 3-6 3-8 0z" fill="#c9b0a8" /><path d="M19.500 3.500h3" stroke="#fff" />
        </TaskIcon>
        <TaskIcon name="Power BI" active><rect x="12" width="8" height="24" rx="1" fill="#c98a12" /><rect x="7" y="6" width="8" height="18" rx="1" fill="#e9b92b" /><rect x="2" y="12" width="8" height="12" rx="1" fill="#f6d95e" /></TaskIcon>
      </div>
      <div className="flex items-center justify-end pr-[18px]">
        <button type="button" aria-label="Hidden icons" className="mr-[21px]"><svg width="11" height="7" viewBox="0 0 11 7" fill="none" stroke="#222" strokeWidth="1.400"><path d="M1 6l4.500-4.500L10 6" /></svg></button>
        <button type="button" className="mr-[18px] text-center leading-4">ENG<br />US</button>
        <button type="button" aria-label="Network, volume and battery" className="mr-4 flex items-center gap-2">
          <svg width="16" height="13" viewBox="0 0 16 13" fill="none" stroke="#222" strokeWidth="1.200"><path d="M1 5c4-5 10-5 14 0M3 7.500c3-3.500 7-3.500 10 0M5 9.500c2-2 4-2 6 0" /><circle cx="8" cy="11" r="1.200" fill="#222" stroke="none" /></svg>
          <svg width="17" height="13" viewBox="0 0 17 13" fill="none" stroke="#222" strokeWidth="1.100"><path d="M1 4.500h2.500L7 1v11L3.500 8.500H1zM9.500 4.500c1 1 1 3 0 4" /><path d="M11.500 3c2 2 2 5 0 7M13.500 1c3 3 3 8 0 11" stroke="#bbb" /></svg>
          <svg width="17" height="13" viewBox="0 0 17 13" fill="none" stroke="#222"><rect x="2" y="3.500" width="12" height="8.500" rx="2" strokeWidth="1.200" /><path d="M4 6h8.500v4.500H4z" fill="#222" stroke="none" /><path d="M15.500 6v3" strokeWidth="1.500" /><path d="M3 0L0 5h2L1 8l4-5H3z" fill="#222" stroke="#eee" strokeWidth=".4" /></svg>
        </button>
        <button type="button" className="text-right text-[12px] leading-4">9:14 AM<br />8/11/2025</button>
      </div>
    </div>
  );
}

export default function App() {
  return (
    <div className="flex h-screen flex-col overflow-hidden bg-[#141414] font-['Open_Sans','Noto_Sans',sans-serif]">
      <TitleBar />
      <MenuBar />
      <Ribbon />
      <main className="flex min-h-0 flex-1">
        <LeftRail />
        <div className="flex min-w-0 flex-1 flex-col border-l border-[#444]">
          <div className="flex h-[33px] shrink-0 items-center border-b border-[#666] bg-[#141414] pl-[14px] pr-[10px] pt-px text-[11px] text-white">
            <Ic><circle cx="8" cy="8" r="8" fill="#b3b3b3" stroke="none" /><path d="M8 3.500v2M8 6.500v6" stroke="#333" strokeWidth="1.800" /></Ic>
            <span className="ml-2">Auto recovery contains some recovered files that haven't been opened.</span>
            <button type="button" className="ml-auto h-6 rounded bg-[#292929] px-[9px]">View recovered files</button>
            <button type="button" aria-label="Dismiss" className="ml-[14px]"><Ic w={12}><path d="M1 1l10 10M11 1L1 11" stroke="#bbb" /></Ic></button>
          </div>
          <div className="flex min-h-0 flex-1">
            <Canvas />
            <aside className="flex w-[33px] shrink-0 flex-col items-center border-l border-[#b3b3b3] bg-white pt-2 text-[#252423]">
              <button type="button" className="flex flex-col items-center">
                <svg width="10" height="12" viewBox="0 0 10 12" fill="none" stroke="#333" strokeWidth="1.200" className="ml-2" aria-hidden="true"><path d="M8.500 1v10M5.500 3v6M2.500 4.500v3" /></svg>
                <span className="mt-[10px] text-[15px] font-semibold [writing-mode:vertical-rl]">Filters</span>
              </button>
            </aside>
          </div>
          <PageTabs />
        </div>
        <RightRail />
      </main>
      <StatusBar />
      <Taskbar />
    </div>
  );
}
